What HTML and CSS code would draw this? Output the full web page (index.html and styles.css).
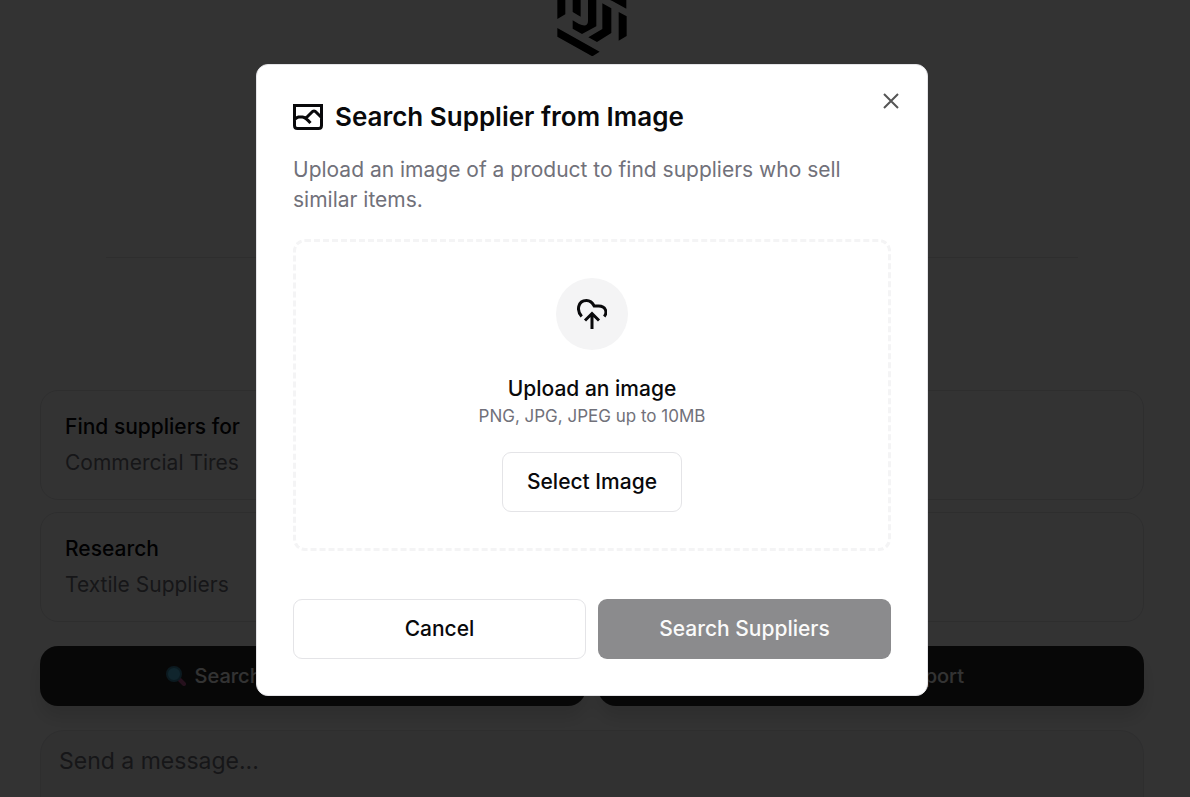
FILE: index.html
```html
<!DOCTYPE html>
<html lang="en">
<head>
<meta charset="utf-8">
<title>Search Supplier from Image</title>
<link rel="stylesheet" href="styles.css">
</head>
<body>
<main class="page">
  <header class="hero">
    <svg class="logo" viewBox="82 0 208 168" aria-hidden="true">
      <path d="M82 0h24v43l-24 14zM128 0h24v50l-24-14zM174 0h25v79l-43 23-28-16V61l19 11q27 12 27-10zM217 10l27 15v74l-43 27-26-14 42-25zM240 0h49v26l-42-23zM266 36l24 13v59l-24 14zM82 84l127 71-22 14-105-59z"/>
    </svg>
    <hr class="divider">
  </header>
  <section class="suggestions">
    <button class="suggestion" type="button"><strong>Find suppliers for</strong><span>Commercial Tires</span></button>
    <button class="suggestion" type="button"><strong>Research</strong><span>Textile Suppliers</span></button>
  </section>
  <div class="tools">
    <button class="tool" type="button">
      <svg class="tool-icon" viewBox="0 0 20 20" aria-hidden="true"><path d="M13 13l5 5" stroke="#b8508c" stroke-width="4" stroke-linecap="round"/><circle cx="8" cy="8" r="7" fill="#50b8e0" stroke="#3a80a0" stroke-width="2"/></svg>
      Search Supplier from Image
    </button>
    <button class="tool" type="button">
      <svg class="tool-icon" viewBox="0 0 20 20" aria-hidden="true"><path d="M3 1h14v18H3z" fill="#ddd"/></svg>
      Generate Report
    </button>
  </div>
  <textarea class="composer" placeholder="Send a message..." aria-label="Message"></textarea>
</main>

<div class="overlay">
  <section class="dialog" role="dialog" aria-modal="true" aria-labelledby="dialog-title">
    <button class="close" type="button" aria-label="Close">
      <svg viewBox="0 0 14 14" aria-hidden="true"><path d="M0 0l14 14M14 0L0 14"/></svg>
    </button>
    <h2 class="title" id="dialog-title">
      <svg class="title-icon" viewBox="0 0 30 26" aria-hidden="true"><path d="M1.500 1.500h27v20q0 3-3 3h-21q-3 0-3-3zM1.500 15.500q2-2 4-2.500h4q3 .5 8 6M12.500 14.500L18.500 8.500q2.500-3 5 0l5 5"/></svg>
      Search Supplier from Image
    </h2>
    <p class="description">Upload an image of a product to find suppliers who sell similar items.</p>
    <div class="dropzone">
      <div class="badge">
        <svg viewBox="0 0 30 30" aria-hidden="true"><path d="M4.700 17.500C-.5 12 .5 1.500 9.500 1.500c4 0 6 2.200 7.700 5.500h4.500c7 0 9 6.500 5.500 10.500M15 30V14.500M8 21.500l7-7 7 7"/></svg>
      </div>
      <p class="drop-title">Upload an image</p>
      <p class="drop-hint">PNG, JPG, JPEG up to 10MB</p>
      <button class="button" type="button">Select Image</button>
    </div>
    <div class="actions">
      <button class="button" type="button">Cancel</button>
      <button class="button primary" type="button" disabled>Search Suppliers</button>
    </div>
  </section>
</div>
</body>
</html>
```
FILE: styles.css
```css
* { box-sizing: border-box; }
body {
  display: flex;
  flex-direction: column;
  margin: 0;
  height: 100vh;
  overflow: hidden;
  background: #fff;
  color: #09090b;
  font-family: Inter, "Liberation Sans", sans-serif;
  font-size: 21px;
  line-height: 30px;
}
button, textarea { font: inherit; color: inherit; }
h2, p { margin: 0; }
svg { display: block; fill: none; }
.page {
  display: flex;
  flex: 1;
  flex-direction: column;
  padding: 0 46px 0 40px;
}
.hero {
  display: flex;
  flex-direction: column;
  align-items: center;
  height: 390px;
}
.logo { width: 70px; height: 56px; fill: #000; }
.divider {
  width: 88%;
  height: 1px;
  margin: 201px 0 0;
  border: 0;
  background: #e4e4e7;
}
.suggestions { display: grid; gap: 12px; }
.suggestion {
  display: flex;
  flex-direction: column;
  gap: 6px;
  padding: 21px 24px;
  border: 1px solid #e4e4e7;
  border-radius: 18px;
  background: transparent;
  text-align: left;
}
.suggestion strong { font-weight: 500; }
.suggestion span { color: #71717a; }
.tools {
  display: grid;
  grid-template-columns: 1fr 1fr;
  gap: 12px;
  margin: 24px 0;
}
.tool {
  display: flex;
  align-items: center;
  justify-content: center;
  gap: 9px;
  height: 60px;
  border: 0;
  border-radius: 18px;
  background: #262626;
  color: #fff;
  font-size: 20px;
  font-weight: 500;
  box-shadow: 0 12px 18px rgba(0, 0, 0, .12);
}
.tool-icon { width: 20px; height: 20px; }
.composer {
  display: block;
  flex: 1;
  width: 100%;
  padding: 14px 18px;
  border: 1px solid #e4e4e7;
  border-bottom: 0;
  border-radius: 24px 24px 0 0;
  background: #f4f4f5;
  font-size: 23px;
  line-height: 32px;
  resize: none;
}
.composer::placeholder { color: #71717a; opacity: 1; }
.overlay {
  position: fixed;
  inset: 0;
  display: flex;
  justify-content: center;
  align-items: flex-start;
  padding: 64px 6px 0 0;
  background: rgba(0, 0, 0, .8);
}
.dialog {
  position: relative;
  width: 100%;
  max-width: 672px;
  padding: 36px;
  border: 1px solid #e4e4e7;
  border-radius: 12px;
  background: #fff;
}
.close {
  position: absolute;
  top: 29px;
  right: 29px;
  padding: 0;
  border: 0;
  background: none;
}
.close svg { width: 14px; height: 14px; stroke: #555; stroke-width: 2; overflow: visible; }
.title {
  display: flex;
  align-items: center;
  gap: 12px;
  font-size: 26px;
  font-weight: 600;
  line-height: 32px;
}
.title-icon { width: 30px; height: 26px; stroke: #09090b; stroke-width: 3; }
.description { margin: 22px 0 24px; color: #71717a; }
.dropzone {
  display: flex;
  flex-direction: column;
  align-items: center;
  padding: 36px;
  border: 3px dashed #f4f4f5;
  border-radius: 12px;
}
.badge {
  display: grid;
  place-items: center;
  width: 72px;
  height: 72px;
  margin-bottom: 24px;
  border-radius: 50%;
  background: #f4f4f5;
}
.badge svg { width: 30px; height: 30px; stroke: #09090b; stroke-width: 3; }
.drop-title { font-weight: 500; }
.drop-hint {
  margin-bottom: 24px;
  color: #71717a;
  font-size: 17px;
  line-height: 24px;
}
.button {
  height: 60px;
  padding: 0 24px;
  border: 1px solid #e4e4e7;
  border-radius: 9px;
  background: #fff;
  font-weight: 500;
}
.actions {
  display: grid;
  grid-template-columns: 1fr 1fr;
  gap: 12px;
  margin-top: 48px;
}
.primary { border: 0; background: #8b8b8d; color: #fafafa; }
```
